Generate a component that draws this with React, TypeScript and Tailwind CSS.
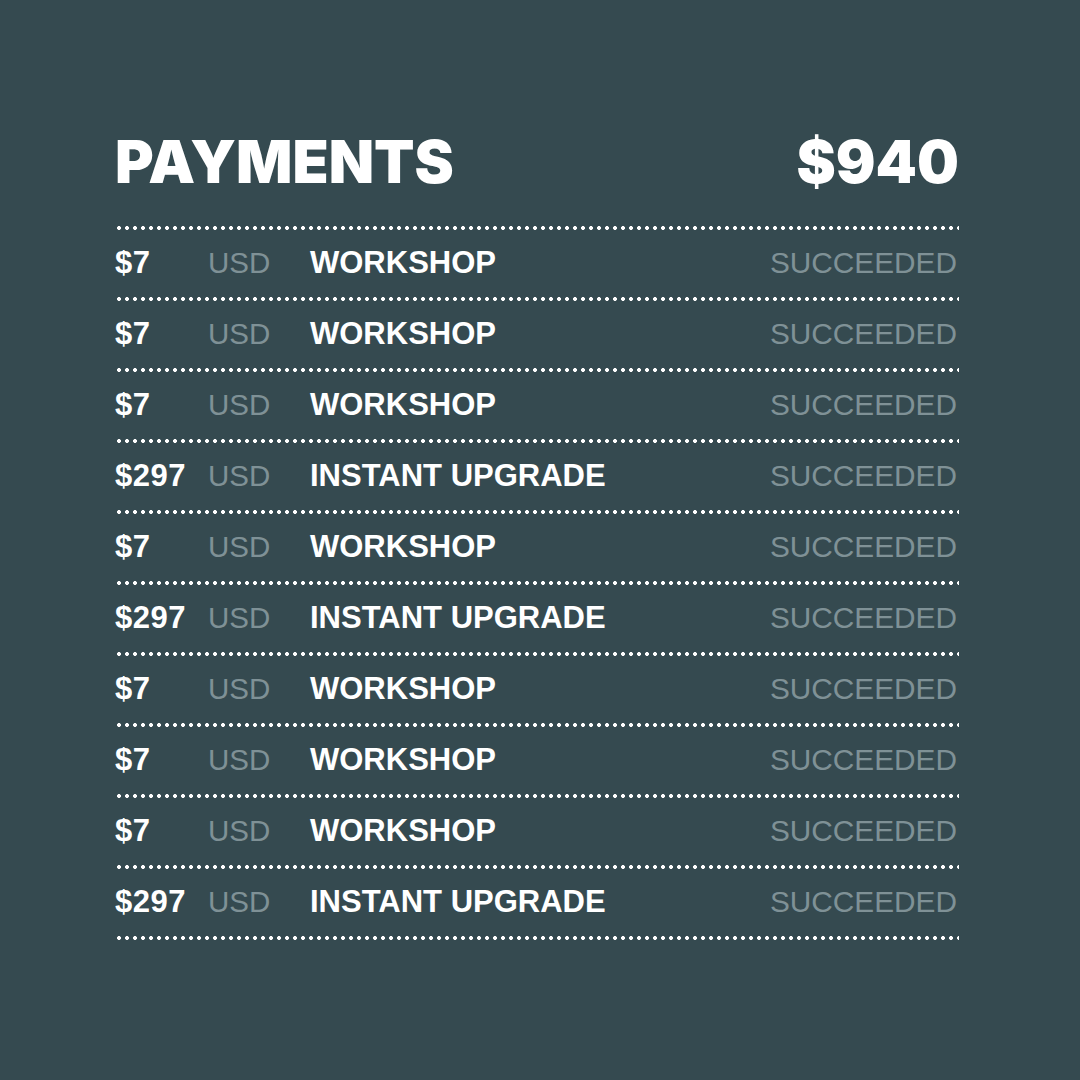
const payments = [
  { amount: '$7', product: 'WORKSHOP' },
  { amount: '$7', product: 'WORKSHOP' },
  { amount: '$7', product: 'WORKSHOP' },
  { amount: '$297', product: 'INSTANT UPGRADE' },
  { amount: '$7', product: 'WORKSHOP' },
  { amount: '$297', product: 'INSTANT UPGRADE' },
  { amount: '$7', product: 'WORKSHOP' },
  { amount: '$7', product: 'WORKSHOP' },
  { amount: '$7', product: 'WORKSHOP' },
  { amount: '$297', product: 'INSTANT UPGRADE' },
];

function Dots() {
  return (
    <div className="h-[4px] w-full bg-[radial-gradient(circle_at_center,#ffffff_1.8px,transparent_2.2px)] bg-[length:8px_4px] bg-repeat-x" />
  );
}

export default function App() {
  return (
    <div className="w-[1080px] h-[1080px] bg-[#354a50] pl-[115px] pr-[121px] pt-[132px]">
      <div className="flex justify-between items-start h-[60px] text-white font-['Inter',sans-serif] font-black text-[59px] leading-[60px]">
        <span>PAYMENTS</span>
        <span>$940</span>
      </div>

      <div className="mt-[34px]">
        <Dots />
        {payments.map((p, i) => (
          <div key={i}>
            <div className="h-[67px] flex items-center font-['Liberation_Sans',Arial,sans-serif]">
              <span className="w-[93px] text-white font-bold text-[31px] tracking-[0.5px]">{p.amount}</span>
              <span className="w-[102px] text-[#7f9196] text-[29.5px]">USD</span>
              <span className="flex-1 text-white font-bold text-[31px]">{p.product}</span>
              <span className="mr-[2px] text-[#7f9196] text-[29.8px]">SUCCEEDED</span>
            </div>
            <Dots />
          </div>
        ))}
      </div>
    </div>
  );
}
